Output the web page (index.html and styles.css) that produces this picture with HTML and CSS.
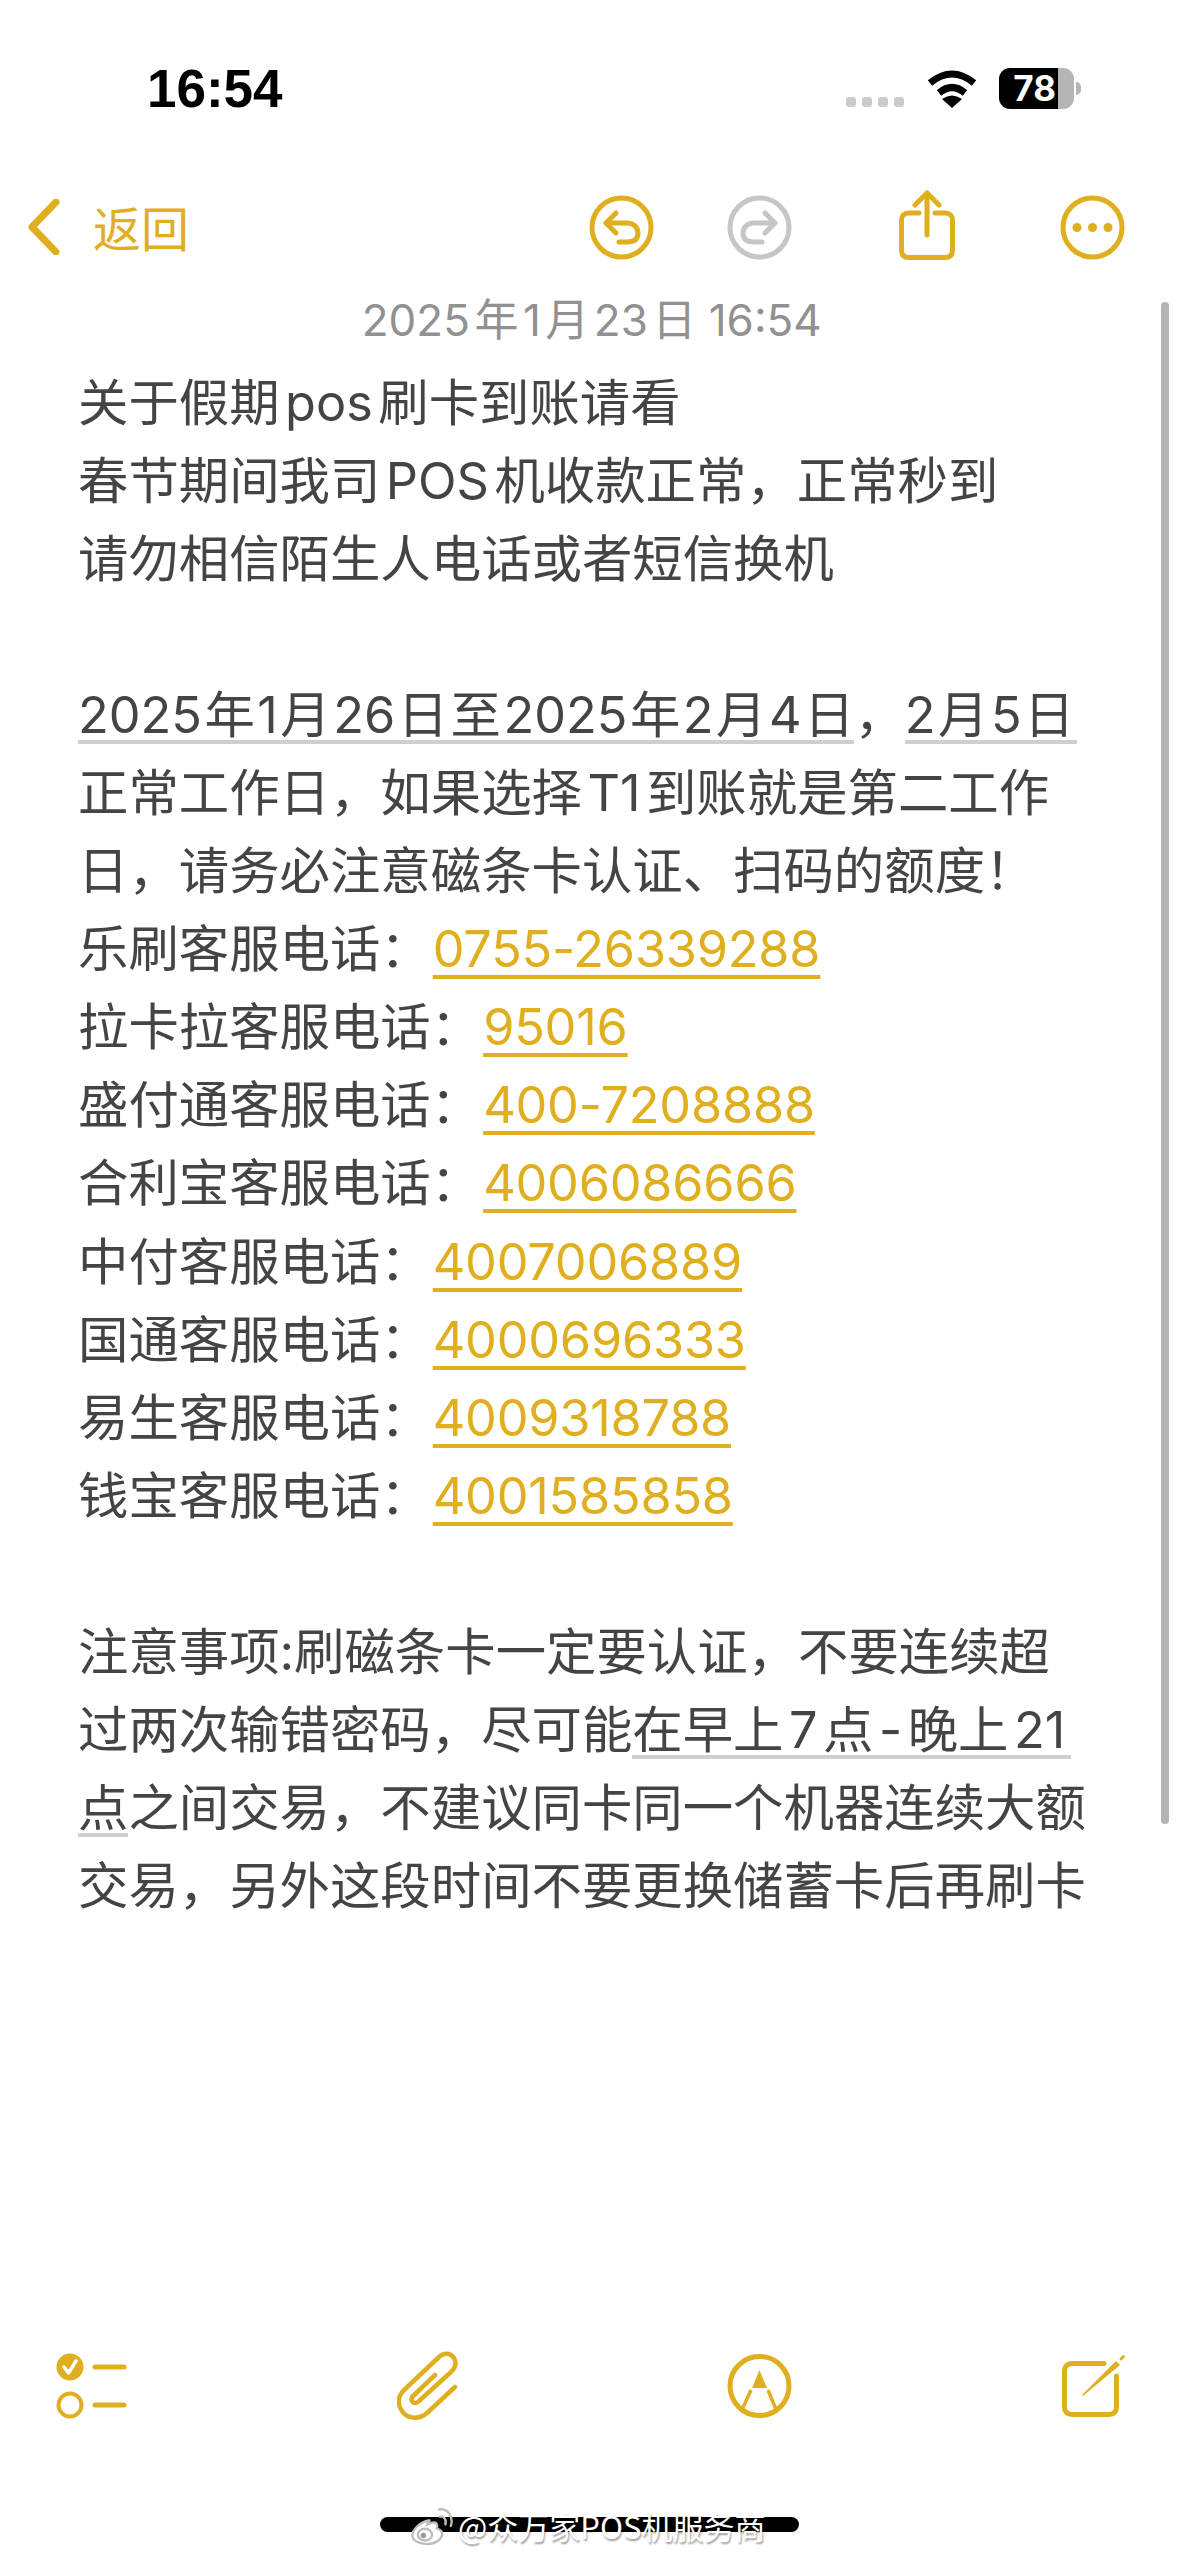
FILE: index.html
```html
<!DOCTYPE html>
<html lang="zh-CN">
<head>
    <meta charset="UTF-8">
    <meta name="viewport" content="width=device-width, initial-scale=1.0">
    <title>备忘录</title>
    <link rel="stylesheet" href="styles.css">
</head>
<body>
    <div class="screen">
        <!-- Status bar -->
        <header class="status-bar">
            <span class="clock">16:54</span>
            <div class="status-icons">
                <div class="signal-dots"><i></i><i></i><i></i><i></i></div>
                <svg class="wifi" width="50" height="39" viewBox="0 0 50 39">
                    <path d="M3 14Q25 -4 47 14" fill="none" stroke="#000" stroke-width="7"/>
                    <path d="M12 24Q25 13 38 24" fill="none" stroke="#000" stroke-width="7"/>
                    <path d="M25 39L15 30Q25 23 35 30Z" fill="#000"/>
                </svg>
                <div class="battery"><span class="battery-level">78</span></div>
                <div class="battery-nub"></div>
            </div>
        </header>

        <!-- Note navigation -->
        <nav class="nav-bar">
            <a class="back">
                <svg width="32" height="56" viewBox="0 0 32 56">
                    <path d="M28 3L4 28L28 53" fill="none" stroke="#e0af1f" stroke-width="7" stroke-linecap="round" stroke-linejoin="round"/>
                </svg>
                <span>返回</span>
            </a>
            <div class="nav-actions">
                <svg width="65" height="65" viewBox="0 0 65 65" fill="none" stroke="#e0af1f" stroke-width="5" stroke-linecap="round" stroke-linejoin="round">
                    <circle cx="32.5" cy="32.5" r="29.5"/>
                    <path d="M27 18L17 28L27 38"/>
                    <path d="M17 28H38C45 28 49 33 49 38C49 44 45 47 38 47H30"/>
                </svg>
                <svg width="65" height="65" viewBox="0 0 65 65" fill="none" stroke="#c6c6c6" stroke-width="5" stroke-linecap="round" stroke-linejoin="round">
                    <circle cx="32.5" cy="32.5" r="29.5"/>
                    <path d="M38 18L48 28L38 38"/>
                    <path d="M48 28H27C20 28 16 33 16 38C16 44 20 47 27 47H35"/>
                </svg>
                <svg class="share" width="56" height="70" viewBox="0 0 56 70" fill="none" stroke="#e0af1f" stroke-width="5" stroke-linecap="round" stroke-linejoin="round">
                    <path d="M20 23H10C5 23 2.500 26 2.500 30V60C2.500 65 5 67.500 10 67.500H46C51 67.500 53.500 65 53.500 60V30C53.500 26 51 23 46 23H36"/>
                    <path d="M28 3V45"/>
                    <path d="M16 15L28 3L40 15"/>
                </svg>
                <svg width="65" height="65" viewBox="0 0 65 65" fill="none" stroke="#e0af1f" stroke-width="5">
                    <circle cx="32.5" cy="32.5" r="29.5"/>
                    <g fill="#e0af1f" stroke="none">
                        <circle cx="17" cy="32.500" r="4.500"/>
                        <circle cx="32.500" cy="32.500" r="4.500"/>
                        <circle cx="48" cy="32.500" r="4.500"/>
                    </g>
                </svg>
            </div>
        </nav>

        <p class="note-date"><span class="latin">2025</span>年<span class="latin">1</span>月<span class="latin">23</span>日 16:54</p>

        <!-- Note body, line breaks kept as the note wraps them -->
        <main class="note">
            <div class="line">关于假期<span class="latin">pos</span>刷卡到账请看</div>
            <div class="line">春节期间我司<span class="latin">POS</span>机收款正常，正常秒到</div>
            <div class="line">请勿相信陌生人电话或者短信换机</div>
            <div class="line">&nbsp;</div>
            <div class="line"><span class="detected">2025<span class="tight">年</span>1<span class="tight">月</span>26<span class="tight">日</span>至<span class="tight">2025</span>年<span class="tight">2</span>月<span class="tight">4</span>日</span>，<span class="detected">2<span class="tight">月</span>5<span class="tight">日</span></span></div>
            <div class="line">正常工作日，如果选择<span class="latin">T1</span>到账就是第二工作</div>
            <div class="line">日，请务必注意磁条卡认证、扫码的额度！</div>
            <div class="line">乐刷客服电话：<a class="phone">0755-26339288</a></div>
            <div class="line">拉卡拉客服电话：<a class="phone">95016</a></div>
            <div class="line">盛付通客服电话：<a class="phone">400-7208888</a></div>
            <div class="line">合利宝客服电话：<a class="phone">4006086666</a></div>
            <div class="line">中付客服电话：<a class="phone">4007006889</a></div>
            <div class="line">国通客服电话：<a class="phone">4000696333</a></div>
            <div class="line">易生客服电话：<a class="phone">4009318788</a></div>
            <div class="line">钱宝客服电话：<a class="phone">4001585858</a></div>
            <div class="line">&nbsp;</div>
            <div class="line">注意事项:刷磁条卡一定要认证，不要连续超</div>
            <div class="line">过两次输错密码，尽可能<span class="detected">在早上<span class="latin">7</span>点<span class="latin">-</span>晚上<span class="latin">21</span></span></div>
            <div class="line"><span class="detected">点</span>之间交易，不建议同卡同一个机器连续大额</div>
            <div class="line">交易，另外这段时间不要更换储蓄卡后再刷卡</div>
        </main>

        <!-- Bottom toolbar -->
        <footer class="toolbar">
            <svg width="71" height="66" viewBox="0 0 71 66" fill="none" stroke="#e0af1f" stroke-width="5" stroke-linecap="round">
                <circle cx="14" cy="14" r="13.500" fill="#e0af1f" stroke="none"/>
                <path d="M8 14L12.500 20L20 8" stroke="#fff" stroke-width="3.500" stroke-linejoin="round"/>
                <circle cx="14" cy="52" r="11.500" stroke-width="4"/>
                <path d="M39 14H68"/>
                <path d="M39 52H68"/>
            </svg>
            <svg width="61" height="69" viewBox="0 0 61 69" fill="none" stroke="#e0af1f" stroke-width="4.500" stroke-linecap="round" stroke-linejoin="round">
                <path d="M58 36L30 62C22 69 10 68 5 60C0 53 1 46 6 40L42 6C47 1 54 2 57 7C60 12 58 17 54 21L22 50C18 54 13 51 15 46L38 24"/>
            </svg>
            <svg width="65" height="66" viewBox="0 0 65 66" fill="none" stroke="#e0af1f" stroke-width="5">
                <circle cx="32.500" cy="33" r="29.500"/>
                <path d="M32.500 17L25 35H40Z" fill="#e0af1f" stroke="none"/>
                <path d="M24 37L14 59M41 37L50 59" stroke-width="3.500"/>
            </svg>
            <svg width="65" height="64" viewBox="0 0 65 64" fill="none" stroke="#e0af1f" stroke-width="5" stroke-linecap="round">
                <path d="M42 9.500H11C5 9.500 2.500 12 2.500 18V52C2.500 58 5 60.500 11 60.500H46C52 60.500 54.500 58 54.500 52V22"/>
                <path d="M21 41L54 8L57 11Z" fill="#e0af1f" stroke-width="1.500" stroke-linejoin="round"/>
                <path d="M59 5L61.500 2.500" stroke-width="3"/>
            </svg>
        </footer>

        <div class="home-indicator"></div>

        <!-- Overlays -->
        <div class="scrollbar"></div>
        <div class="weibo-mark">
            <svg width="44" height="40" viewBox="0 0 56 50" fill="none" stroke="#bdbdbd" stroke-width="3" stroke-linecap="round">
                <path d="M24 18C12 20 3 30 3 37C3 44 12 48 22 48C33 48 41 41 41 35C41 30 36 29 34 28C36 22 33 19 27 21L22 23C24 19 26 17 24 18Z" fill="#fff"/>
                <ellipse cx="19" cy="36" rx="9" ry="7.500" fill="#fff"/>
                <circle cx="17" cy="37" r="3.500" fill="#9a9a9a" stroke="none"/>
                <path d="M38 13C43 12 47 17 45 23"/>
                <path d="M37 4C47 2 56 12 52 25"/>
            </svg>
            <span>@众万家POS机服务商</span>
        </div>
    </div>
</body>
</html>
```

FILE: styles.css
```css
/* General Reset */
* {
    margin: 0;
    padding: 0;
    box-sizing: border-box;
}

body {
    background: #fff;
    font-family: Inter, 'Noto Sans CJK SC', sans-serif;
}

.screen {
    position: relative;
    display: flex;
    flex-direction: column;
    width: 1179px;
    height: 2556px;
    overflow: hidden;
    background: #fff;
}

/* Status Bar */
.status-bar {
    display: flex;
    justify-content: space-between;
    align-items: center;
    height: 190px;
    padding: 0 98px 14px 147px;
}

.clock {
    font-family: 'Liberation Sans', sans-serif;
    font-size: 53px;
    font-weight: bold;
    color: #000;
}

.status-icons {
    display: flex;
    align-items: center;
}

.signal-dots {
    display: flex;
    gap: 6px;
    margin: 28px 23px 0 0;
}

.signal-dots i {
    width: 10px;
    height: 10px;
    border-radius: 3px;
    background: #cbcbcb;
}

.wifi {
    margin-right: 22px;
}

.battery {
    width: 75px;
    height: 41px;
    border-radius: 11px;
    background: linear-gradient(to right, #000 79%, #b5b5b5 79%);
}

.battery-level {
    display: block;
    width: 57px;
    font-size: 35px;
    font-weight: 700;
    line-height: 41px;
    text-align: right;
    color: #fff;
}

.battery-nub {
    width: 5px;
    height: 13px;
    margin-left: 2px;
    border-radius: 0 5px 5px 0;
    background: #b5b5b5;
}

/* Navigation */
.nav-bar {
    display: flex;
    justify-content: space-between;
    align-items: center;
    height: 72px;
    padding: 2px 54px 0 28px;
}

.back {
    display: flex;
    align-items: center;
    gap: 33px;
    font-size: 48px;
    line-height: 66px;
    color: #e0af1f;
}

.back span {
    margin-top: 5px;
}

.nav-actions {
    display: flex;
    align-items: center;
    gap: 73px;
}

.share {
    margin: 0 32px 4px 34px;
}

.note-date {
    margin-top: 30px;
    font-size: 44px;
    line-height: 56px;
    text-align: center;
    color: #919191;
}

.note-date .latin {
    margin: 0 4.5px;
}

/* Note Body */
.note {
    margin-top: 16px;
    padding-left: 78px;
    font-size: 50.4px;
    color: #444;
}

.line {
    height: 78.05px;
    line-height: 78.05px;
    white-space: nowrap;
}

/* Gap the notes app leaves between Chinese and Latin runs */
.latin {
    margin: 0 5.5px;
}

.tight {
    margin: 0 2.5px;
}

/* Background bar, so the line carries on through the gaps of nested runs */
.detected {
    background: linear-gradient(#cfcfcf, #cfcfcf) left bottom 1px / 100% 4px no-repeat;
}

.phone {
    margin-left: 2px;
    color: #e0af1f;
    letter-spacing: -0.2px;
    text-decoration: underline 4px #e0af1f;
    text-decoration-skip-ink: none;
    text-underline-offset: 8px;
}

/* Toolbar */
.toolbar {
    display: flex;
    justify-content: space-between;
    align-items: center;
    margin-top: auto;
    padding: 0 52px 0 56px;
}

.home-indicator {
    width: 419px;
    height: 15px;
    margin: 97px auto 24px;
    border-radius: 8px;
    background: #000;
}

/* Overlays */
.scrollbar {
    position: absolute;
    top: 302px;
    right: 10px;
    width: 8px;
    height: 1522px;
    border-radius: 4px;
    background: #b4b4b4;
}

.weibo-mark {
    position: absolute;
    top: 2503px;
    left: 410px;
    display: flex;
    align-items: center;
    gap: 4px;
    font-family: 'Noto Sans CJK SC', sans-serif;
    font-size: 31px;
    color: #fff;
    text-shadow: 1px 2px 2px rgba(0, 0, 0, 0.4);
}
```
